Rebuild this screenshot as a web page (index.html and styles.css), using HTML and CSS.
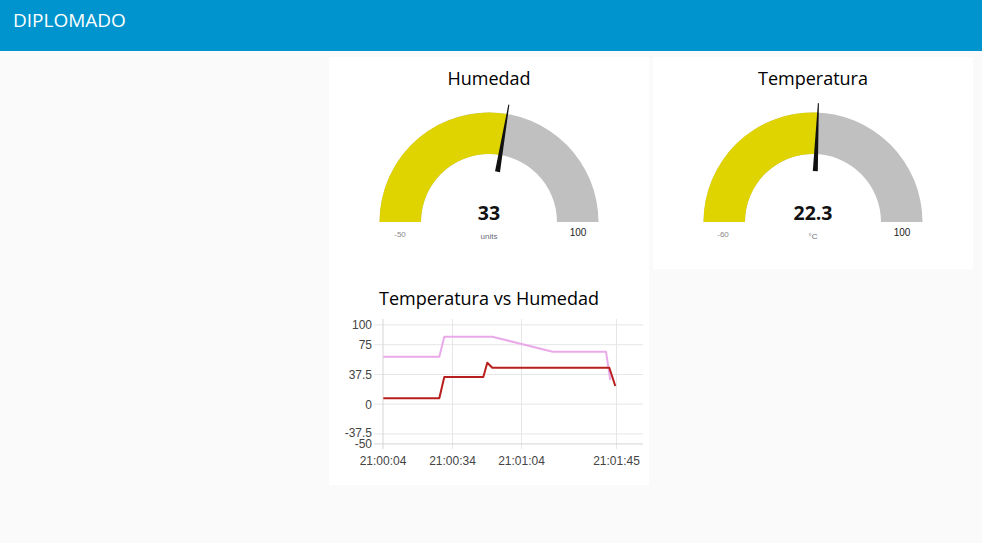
FILE: index.html
```html
<!DOCTYPE html>
<html lang="es">
<head>
<meta charset="utf-8">
<title>DIPLOMADO</title>
<link rel="stylesheet" href="styles.css">
</head>
<body>
<header class="toolbar">
  <div class="toolbar-title">DIPLOMADO</div>
</header>
<main class="content">
  <section class="group">
    <div class="widget gauge-widget">
      <div class="widget-title">Humedad</div>
      <svg class="gauge" width="320" height="179" viewBox="0 0 320 179">
        <path class="arc-bg" d="M50.5 132 A109.5 109.5 0 0 1 269.5 132 L228 132 A68 68 0 0 0 92 132 Z"/>
        <path class="arc-val" d="M50.5 132 A109.5 109.5 0 0 1 178.26 24.03 L171.34 64.95 A68 68 0 0 0 92 132 Z"/>
        <polygon class="needle" points="157.5,81 162.5,81 160.5,13 159.5,13" transform="rotate(9.6 160 132)"/>
        <text class="g-value" x="160" y="129.5">33</text>
        <text class="g-unit" x="160" y="149">units</text>
        <text class="g-min" x="71" y="146.5">-50</text>
        <text class="g-max" x="249" y="146">100</text>
      </svg>
    </div>
    <div class="widget chart-widget">
      <div class="widget-title chart-title">Temperatura vs Humedad</div>
      <svg class="chart" width="320" height="175" viewBox="0 0 320 175">
        <g class="grid">
          <line x1="45" y1="14.9" x2="314" y2="14.9"/>
          <line x1="45" y1="34.7" x2="314" y2="34.7"/>
          <line x1="45" y1="64.5" x2="314" y2="64.5"/>
          <line x1="45" y1="94.2" x2="314" y2="94.2"/>
          <line x1="45" y1="123.9" x2="314" y2="123.9"/>
          <line x1="123.5" y1="9" x2="123.5" y2="139"/>
          <line x1="192.5" y1="9" x2="192.5" y2="139"/>
          <line x1="287.5" y1="9" x2="287.5" y2="139"/>
        </g>
        <g class="axis">
          <line x1="45" y1="133.9" x2="314" y2="133.9"/>
          <line x1="54" y1="9" x2="54" y2="139"/>
        </g>
        <g class="y-labels">
          <text x="43" y="19">100</text>
          <text x="43" y="39">75</text>
          <text x="43" y="68.5">37.5</text>
          <text x="43" y="98.5">0</text>
          <text x="43" y="126.5">-37.5</text>
          <text x="43" y="137.5">-50</text>
        </g>
        <g class="x-labels">
          <text x="54" y="154.5">21:00:04</text>
          <text x="123.5" y="154.5">21:00:34</text>
          <text x="192.5" y="154.5">21:01:04</text>
          <text x="287.5" y="154.5">21:01:45</text>
        </g>
        <polyline class="series-hum" points="54.3,46.7 110.3,46.7 115.3,26.7 163.3,26.7 223.7,41.7 277,41.7 281.3,70"/>
        <polyline class="series-temp" points="54.3,88.3 110.3,88.3 115.3,67 154.3,67 158.3,52.7 163.3,57.7 280.3,57.7 286.3,76"/>
      </svg>
    </div>
  </section>
  <section class="group">
    <div class="widget gauge-widget">
      <div class="widget-title">Temperatura</div>
      <svg class="gauge" width="320" height="179" viewBox="0 0 320 179">
        <path class="arc-bg" d="M50.5 132 A109.5 109.5 0 0 1 269.5 132 L228 132 A68 68 0 0 0 92 132 Z"/>
        <path class="arc-val" d="M50.5 132 A109.5 109.5 0 0 1 164.95 22.61 L163.07 64.07 A68 68 0 0 0 92 132 Z"/>
        <polygon class="needle" points="157.5,81 162.5,81 160.5,13 159.5,13" transform="rotate(2.6 160 132)"/>
        <text class="g-value" x="160" y="129.5">22.3</text>
        <text class="g-unit" x="160" y="149">°C</text>
        <text class="g-min" x="70" y="146.5">-60</text>
        <text class="g-max" x="249" y="146">100</text>
      </svg>
    </div>
  </section>
</main>
</body>
</html>
```
FILE: styles.css
```css
html, body {
  margin: 0;
  padding: 0;
}
body {
  background: #fafafa;
  font-family: "Open Sans", "Noto Sans", sans-serif;
  color: #111;
  width: 982px;
  height: 543px;
  overflow: hidden;
}
.toolbar {
  height: 51px;
  background: #0094ce;
  box-sizing: border-box;
  padding: 7px 13px 0;
}
.toolbar-title {
  color: #fff;
  font-size: 19px;
  line-height: 26px;
}
.content {
  display: flex;
  align-items: flex-start;
  gap: 4px;
  padding: 6px 0 0 329px;
}
.group {
  width: 320px;
  background: #fff;
  display: flex;
  flex-direction: column;
}
.widget {
  display: flex;
  flex-direction: column;
}
.gauge-widget {
  height: 212px;
}
.chart-widget {
  height: 216px;
}
.widget-title {
  font-size: 18px;
  line-height: 24px;
  text-align: center;
  padding-top: 9px;
  color: #000;
}
.chart-title {
  padding-top: 17px;
}
.gauge, .chart {
  display: block;
}
.arc-bg {
  fill: #c0c0c0;
}
.arc-val {
  fill: #e0d400;
}
.needle {
  fill: #111;
}
.g-value {
  font-family: "Open Sans", "Noto Sans", sans-serif;
  font-weight: 700;
  font-size: 19.5px;
  text-anchor: middle;
  fill: #111;
}
.g-unit {
  font-family: "Liberation Sans", Arial, sans-serif;
  font-size: 8px;
  text-anchor: middle;
  fill: #6a6a7a;
}
.g-min {
  font-family: "Liberation Sans", Arial, sans-serif;
  font-size: 8px;
  text-anchor: middle;
  fill: #888;
}
.g-max {
  font-family: "Liberation Sans", Arial, sans-serif;
  font-size: 10px;
  text-anchor: middle;
  fill: #222;
}
.grid line {
  stroke: #e6e6e6;
  stroke-width: 1;
}
.axis line {
  stroke: #d4d4d4;
  stroke-width: 1;
}
.y-labels text {
  font-family: "Liberation Sans", Arial, sans-serif;
  font-size: 12px;
  fill: #444;
  text-anchor: end;
}
.x-labels text {
  font-family: "Liberation Sans", Arial, sans-serif;
  font-size: 12px;
  fill: #444;
  text-anchor: middle;
}
.series-hum, .series-temp {
  fill: none;
  stroke-width: 2;
  stroke-linejoin: round;
}
.series-hum {
  stroke: #eaaaea;
}
.series-temp {
  stroke: #b81e1e;
}
```
